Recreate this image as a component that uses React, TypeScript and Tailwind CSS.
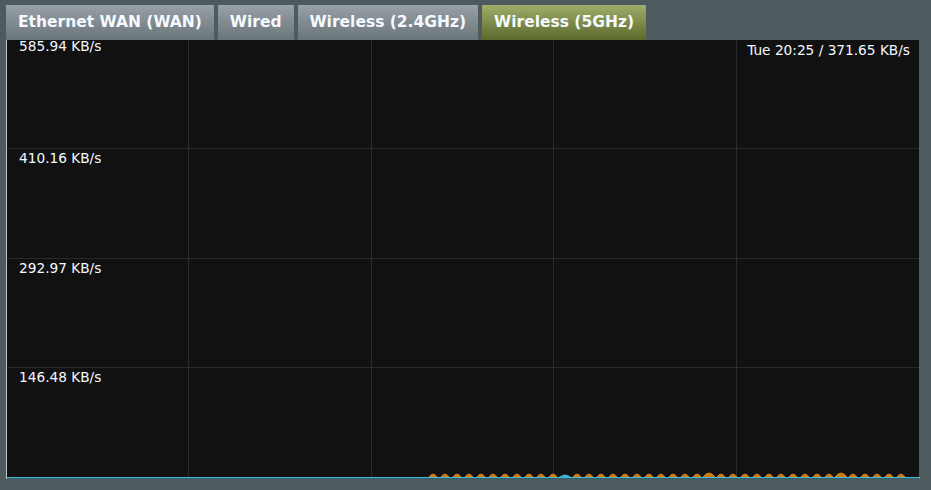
import React from "react";

const tabs = [
  { label: "Ethernet WAN (WAN)", active: false },
  { label: "Wired", active: false },
  { label: "Wireless (2.4GHz)", active: false },
  { label: "Wireless (5GHz)", active: true },
];

const rows = ["585.94 KB/s", "410.16 KB/s", "292.97 KB/s", "146.48 KB/s"];

const W = 913;
const H = 437;

function Traffic() {
  const bumps: React.ReactNode[] = [];
  for (let k = 0; k < 40; k++) {
    const cx = 426 + 12 * k;
    if (cx === 558) continue;
    const wide = cx === 702 || cx === 834;
    const hw = wide ? 6 : 4;
    const h = wide ? 4 : 3;
    bumps.push(
      <path
        key={k}
        d={`M${cx - hw},${H} Q${cx},${H - h * 2} ${cx + hw},${H} Z`}
        fill="#c9780f"
        stroke="#e08a12"
        strokeWidth="0.8"
      />
    );
  }
  return (
    <svg className="absolute inset-0" width={W} height={H + 2} viewBox={`0 0 ${W} ${H + 2}`}>
      {bumps}
      <path d={`M552,${H} Q558,${H - 5} 564,${H} Z`} fill="#3fb3d8" />
      <rect x="0" y={H} width={W} height="1.5" fill="#49b6d6" />
    </svg>
  );
}

export default function App() {
  return (
    <div
      className="w-[931px] h-[490px] bg-[#4d5a5e] pt-[5px] pl-[6px]"
      style={{ fontFamily: '"DejaVu Sans", Verdana, sans-serif' }}
    >
      <div className="flex gap-[4px] h-[35px]">
        {tabs.map((t) => (
          <div
            key={t.label}
            className={
              "px-[12px] flex items-center text-[15.5px] font-bold text-[#f6f9ff] " +
              (t.active
                ? "bg-gradient-to-b from-[#a0ae6a] to-[#5b6a2a]"
                : "bg-gradient-to-b from-[#98a2a6] to-[#6a7579]")
            }
          >
            {t.label}
          </div>
        ))}
      </div>
      <div className="relative w-[913px] h-[439px] bg-[#111111] border-l border-[#bfc4c6]">
        <div className="grid grid-cols-5 grid-rows-4 w-[912px] h-[437px]">
          {Array.from({ length: 20 }).map((_, i) => (
            <div
              key={i}
              className={
                "border-[#2a2a2a] " +
                (i % 5 !== 4 ? "border-r " : "") +
                (i < 15 ? "border-b" : "")
              }
            />
          ))}
        </div>
        <div className="absolute inset-0 grid grid-rows-4 h-[437px]">
          {rows.map((r, i) => (
            <div key={r} className={"pl-[12px] text-[13.7px] text-[#f4f8ff] leading-none " + (i === 0 ? "pt-[0px]" : "pt-[3px]")}>
              {r}
            </div>
          ))}
        </div>
        <div className="absolute right-[9px] top-[4px] text-[13.7px] text-[#f4f8ff] leading-none">
          Tue 20:25 / 371.65 KB/s
        </div>
        <Traffic />
      </div>
    </div>
  );
}
